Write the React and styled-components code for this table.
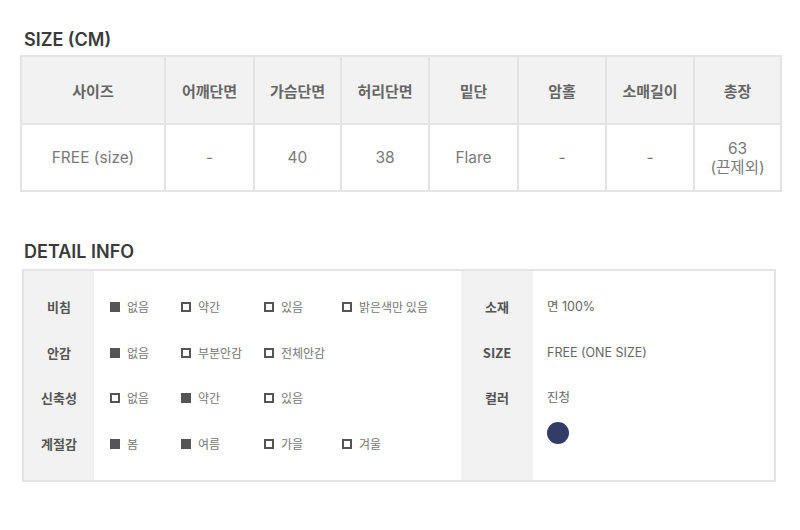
import React from 'react'
import styled, { createGlobalStyle } from 'styled-components'

const Global = createGlobalStyle`
  body {
    margin: 0;
    background: #fff;
    font-family: Inter, "Noto Sans CJK KR", sans-serif;
  }
`

const Page = styled.div`
  width: 800px;
  height: 530px;
  padding: 29px 20px 0 20px;
  box-sizing: border-box;
`

const Title = styled.h2`
  margin: 0 0 0 4px;
  height: 24px;
  line-height: 22px;
  font-family: Inter, "Noto Sans CJK KR", sans-serif;
  font-size: 18px;
  font-weight: 600;
  color: #3a3a3a;
  margin-bottom: ${p => p.gap || 2}px;
`

const SizeTable = styled.table`
  width: 760px;
  border-collapse: collapse;
  table-layout: fixed;
  border: 2px solid #e4e4e4;
  margin-bottom: 49px;
`

const Th = styled.th`
  height: 66px;
  background: #f2f2f2;
  border: 2px solid #e4e4e4;
  font-family: "Noto Sans CJK KR", sans-serif;
  font-size: 15px;
  font-weight: 700;
  color: #666;
  padding: 0;
`

const Td = styled.td`
  height: 65px;
  border: 2px solid #e4e4e4;
  text-align: center;
  font-size: 15.5px;
  line-height: 19px;
  color: #7a7a7a;
  padding: 0;
`

const DetailBox = styled.div`
  margin-left: 2px;
  width: 754px;
  height: 213px;
  box-sizing: border-box;
  border: 2px solid #e4e4e4;
  display: grid;
  grid-template-columns: 70px 367px 72px 1fr;
`

const LabelCol = styled.div`
  background: #f2f2f2;
  padding-top: 25px;
  display: flex;
  flex-direction: column;
`

const ValueCol = styled.div`
  padding-top: 25px;
  padding-left: ${p => p.pad}px;
  display: flex;
  flex-direction: column;
`

const Label = styled.div`
  height: 45.5px;
  line-height: 22px;
  text-align: center;
  font-family: "Noto Sans CJK KR", sans-serif;
  font-size: 13px;
  font-weight: 700;
  color: #555;
`

const OptRow = styled.div`
  height: 45.5px;
  line-height: 22px;
  display: grid;
  grid-template-columns: 71px 83px 78px 1fr;
`

const Opt = styled.span`
  display: flex;
  align-items: center;
  height: 22px;
  font-family: "Noto Sans CJK KR", sans-serif;
  font-size: 12px;
  color: #777;
  white-space: nowrap;
`

const Box = styled.i`
  width: 10px;
  height: 10px;
  box-sizing: border-box;
  margin-right: 7px;
  border: 2px solid #555;
  background: ${p => (p.on ? '#555' : '#fff')};
`

const Value = styled.div`
  height: 45.5px;
  line-height: 22px;
  font-size: 12.5px;
  color: #666;
  font-family: Inter, "Noto Sans CJK KR", sans-serif;
`

const Swatch = styled.span`
  display: block;
  width: 22px;
  height: 22px;
  border-radius: 50%;
  background: ${p => p.color};
  margin: -11px 0 0 0;
`

const heads = ['사이즈', '어깨단면', '가슴단면', '허리단면', '밑단', '암홀', '소매길이', '총장']
const widths = [144, 89, 87, 88, 89, 88, 88, 87]

const details = [
  ['비침', [['없음', 1], ['약간', 0], ['있음', 0], ['밝은색만 있음', 0]]],
  ['안감', [['없음', 1], ['부분안감', 0], ['전체안감', 0]]],
  ['신축성', [['없음', 0], ['약간', 1], ['있음', 0]]],
  ['계절감', [['봄', 1], ['여름', 1], ['가을', 0], ['겨울', 0]]],
]

export default function App() {
  return (
    <Page>
      <Global />
      <Title>SIZE (CM)</Title>
      <SizeTable>
        <colgroup>
          {widths.map((w, i) => <col key={i} style={{ width: w }} />)}
        </colgroup>
        <thead>
          <tr>{heads.map(h => <Th key={h}>{h}</Th>)}</tr>
        </thead>
        <tbody>
          <tr>
            <Td>FREE (size)</Td>
            <Td>-</Td>
            <Td>40</Td>
            <Td>38</Td>
            <Td>Flare</Td>
            <Td>-</Td>
            <Td>-</Td>
            <Td>63<br />(끈제외)</Td>
          </tr>
        </tbody>
      </SizeTable>

      <Title gap={4}>DETAIL INFO</Title>
      <DetailBox>
        <LabelCol>
          {details.map(([l]) => <Label key={l}>{l}</Label>)}
        </LabelCol>
        <ValueCol pad={16}>
          {details.map(([l, opts]) => (
            <OptRow key={l}>
              {opts.map(([t, on]) => (
                <Opt key={t}><Box on={on ? 1 : 0} />{t}</Opt>
              ))}
            </OptRow>
          ))}
        </ValueCol>
        <LabelCol>
          <Label>소재</Label>
          <Label>SIZE</Label>
          <Label>컬러</Label>
        </LabelCol>
        <ValueCol pad={14}>
          <Value>면 100%</Value>
          <Value>FREE (ONE SIZE)</Value>
          <Value>진청</Value>
          <Swatch color="#323c66" />
        </ValueCol>
      </DetailBox>
    </Page>
  )
}
